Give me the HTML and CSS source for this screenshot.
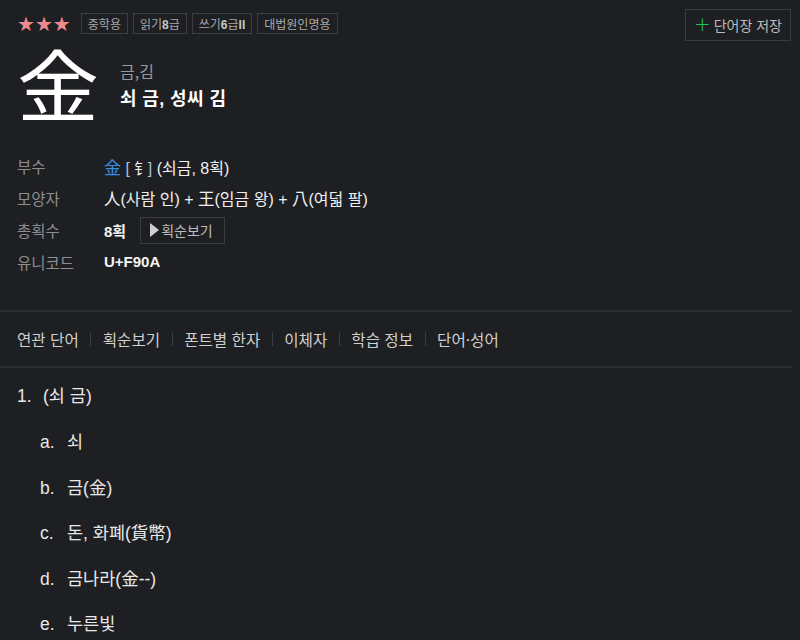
FILE: index.html
```html
<!DOCTYPE html>
<html lang="ko">
<head>
<meta charset="utf-8">
<link rel="stylesheet" href="styles.css">
</head>
<body>
<div class="page">
  <header class="top">
    <div class="badges">
      <span class="stars">★★★</span>
      <span class="tag">중학용</span>
      <span class="tag">읽기<b>8</b>급</span>
      <span class="tag">쓰기<b>6</b>급<b>II</b></span>
      <span class="tag">대법원인명용</span>
    </div>
    <button class="save"><span class="plus">+</span>단어장 저장</button>
  </header>

  <section class="hero">
    <div class="bigchar">&#xF90A;</div>
    <div class="readings">
      <div class="sound">금,김</div>
      <div class="meaning">쇠 금, 성씨 김</div>
    </div>
  </section>

  <dl class="info">
    <div class="row"><dt>부수</dt><dd><span class="rad">金</span> <span class="br">[</span> <span class="hz rsub">钅</span> <span class="br2">]</span> (쇠금, 8획)</dd></div>
    <div class="row"><dt>모양자</dt><dd><span class="hz">人</span>(사람 인) + <span class="hz">王</span>(임금 왕) + <span class="hz">八</span>(여덟 팔)</dd></div>
    <div class="row"><dt>총획수</dt><dd class="flexdd"><span class="strong">8획</span><button class="stroke"><span class="tri"></span>획순보기</button></dd></div>
    <div class="row"><dt>유니코드</dt><dd><span class="strong">U+F90A</span></dd></div>
  </dl>

  <nav class="tabs">
    <span>연관 단어</span><i></i>
    <span>획순보기</span><i></i>
    <span>폰트별 한자</span><i></i>
    <span>이체자</span><i></i>
    <span>학습 정보</span><i></i>
    <span>단어·성어</span>
  </nav>

  <ol class="defs">
    <li><span class="num">1.</span>(쇠 금)
      <ol class="sub">
        <li><span class="let">a.</span>쇠</li>
        <li><span class="let">b.</span>금(金)</li>
        <li><span class="let">c.</span>돈, 화폐(貨幣)</li>
        <li><span class="let">d.</span>금나라(金--)</li>
        <li><span class="let">e.</span>누른빛</li>
      </ol>
    </li>
  </ol>
</div>
</body>
</html>
```

FILE: styles.css
```css
* { box-sizing: border-box; }
html, body { margin: 0; padding: 0; }
body {
  background: #1e1f22;
  color: #e6e6e6;
  font-family: "Liberation Sans", "Noto Sans CJK KR", sans-serif;
  width: 800px;
  height: 640px;
  overflow: hidden;
}
.top {
  display: flex;
  justify-content: space-between;
  align-items: flex-start;
  padding: 9px 9px 0 17px;
}
.badges {
  display: flex;
  align-items: center;
  gap: 5px;
  padding-top: 4px;
}
.stars {
  color: #f08a8a;
  font-size: 20px;
  letter-spacing: 0;
  margin-right: 5px;
  line-height: 20px;
  font-family: "DejaVu Sans", sans-serif;
}
.tag {
  border: 1px solid #3d3e42;
  color: #a8a8a8;
  font-size: 12px;
  height: 21px;
  line-height: 19px;
  padding: 0 6px;
  font-family: "Noto Sans CJK KR", sans-serif;
}
.tag b { font-family: "Liberation Sans", sans-serif; font-weight: bold; color: #c8c8c8; }
.save {
  background: transparent;
  border: 1px solid #3a3b3f;
  color: #bdbdbd;
  font-family: "Noto Sans CJK KR", sans-serif;
  font-size: 14px;
  height: 32px;
  padding: 0 8px;
  display: flex;
  align-items: center;
  gap: 3px;
}
.plus { color: #22c55e; font-size: 20px; font-weight: 300; line-height: 1; margin-top: -2px; font-family: "DejaVu Sans", sans-serif; }
.hero {
  display: flex;
  align-items: flex-start;
  padding-left: 17px;
  height: 92px;
  margin-top: 6px;
}
.bigchar {
  font-family: "Noto Sans CJK KR", sans-serif;
  font-size: 82px;
  line-height: 82px;
  height: 82px;
  color: #ffffff;
  width: 103px;
  transform: scaleY(0.95);
  transform-origin: 0 0;
  margin-top: -3px;
}
.readings { display: flex; flex-direction: column; padding-top: 14px; }
.sound { color: #999a9c; font-size: 16px; font-family: "Noto Sans CJK KR", sans-serif; line-height: 20px; }
.meaning { color: #ffffff; font-size: 18px; font-weight: bold; line-height: 22px; margin-top: 7px; letter-spacing: 0.4px; }
.info {
  margin: 11px 0 0 17px;
  display: flex;
  flex-direction: column;
}
.row { display: flex; align-items: center; height: 32px; }
dt { width: 87px; color: #8d8e91; font-size: 15.5px; font-family: "Noto Sans CJK KR", sans-serif; }
dd { margin: 0; color: #f0f0f0; font-size: 16px; white-space: pre; }
.flexdd { display: flex; align-items: center; }
.strong { font-weight: bold; color: #f4f4f4; font-size: 15px; }
.rad { color: #3b8ee8; font-size: 17px; font-family: "Noto Sans CJK KR", sans-serif; }
.br, .br2 { color: #a9c2e0; font-size: 16px; }
.hz { font-family: "Noto Sans CJK KR", sans-serif; font-size: 16.5px; }
.rsub { display: inline-block; width: 9px; font-size: 15px; }
.stroke {
  margin-left: 14px;
  background: transparent;
  border: 1px solid #3a3b3f;
  color: #bdbdbd;
  font-family: "Noto Sans CJK KR", sans-serif;
  font-size: 14px;
  height: 27px;
  padding: 0 11px 0 9px;
  display: flex;
  align-items: center;
  gap: 2px;
}
.tri {
  width: 0; height: 0;
  border-left: 9px solid #cfcfcf;
  border-top: 7px solid transparent;
  border-bottom: 7px solid transparent;
}
.tabs {
  margin-top: 32px;
  border-top: 2px solid #2c2d31;
  border-bottom: 2px solid #2c2d31;
  width: 792px;
  height: 58px;
  display: flex;
  align-items: center;
  padding-left: 17px;
  font-family: "Noto Sans CJK KR", sans-serif;
  font-size: 15.6px;
  color: #cfcfcf;
}
.tabs i { display: block; width: 1px; height: 14px; background: #3c3d41; margin: 0 11.5px; }
.defs {
  margin: 0;
  padding: 14px 0 0 17px;
  list-style: none;
  font-size: 17.5px;
  color: #e8e8e8;
}
.num { display: inline-block; width: 26px; }
.sub {
  list-style: none;
  padding: 0 0 0 23px;
  margin: 0;
}
.sub li { margin-top: 25px; line-height: 20.5px; }
.let { display: inline-block; width: 27px; }
```
